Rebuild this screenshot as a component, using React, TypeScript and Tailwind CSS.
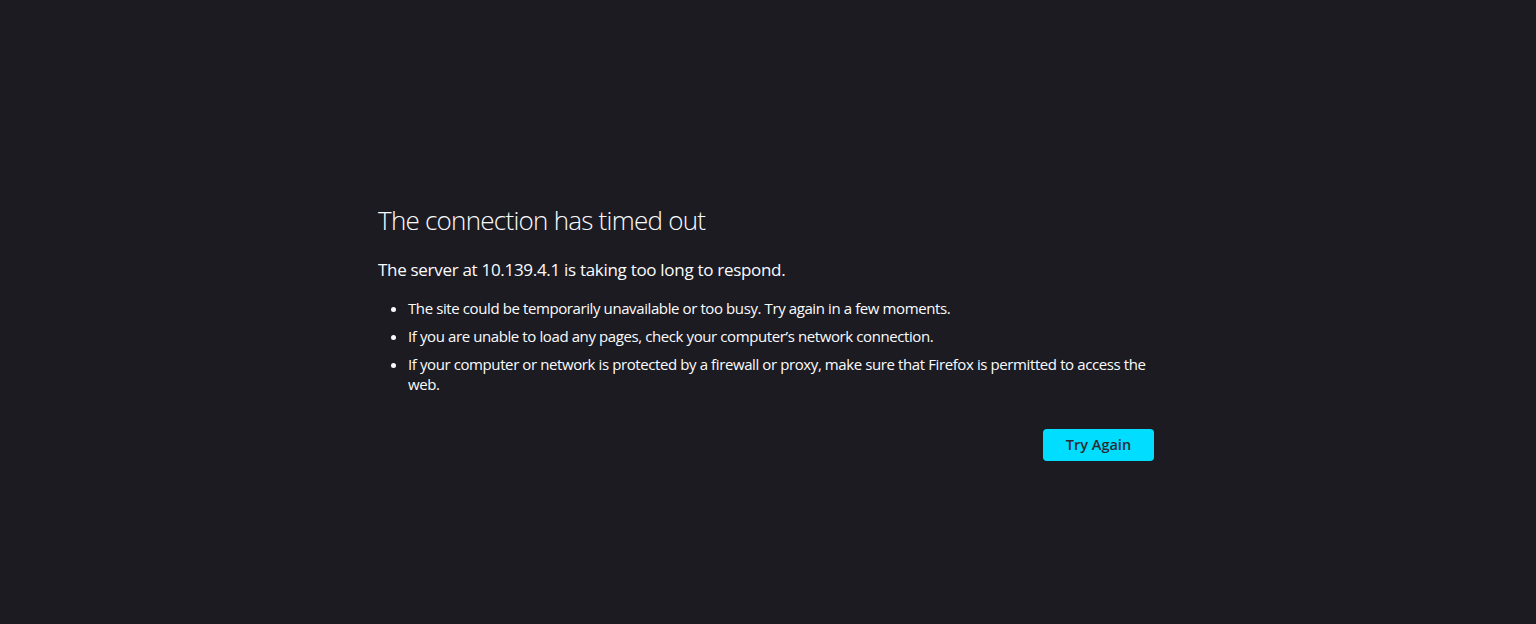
export default function App() {
  const items = [
    "The site could be temporarily unavailable or too busy. Try again in a few moments.",
    "If you are unable to load any pages, check your computer’s network connection.",
    "If your computer or network is protected by a firewall or proxy, make sure that Firefox is permitted to access the web.",
  ];

  return (
    <main className="w-full h-[624px] bg-[#1c1b22] text-[#fbfbfe] font-['Open_Sans',sans-serif] flex justify-center pr-[4px]">
      <div className="w-[776px] pt-[202px]">
        <h1 className="text-[26px] font-light leading-[36px] tracking-[-0.75px]">
          The connection has timed out
        </h1>
        <p className="mt-[20px] text-[17px] leading-[24px] tracking-[-0.3px]">
          The server at 10.139.4.1 is taking too long to respond.
        </p>
        <ul className="mt-[16px] pl-[30px] list-disc text-[15px] leading-[20px] tracking-[-0.4px]">
          {items.map((t) => (
            <li key={t} className="mb-[8px]">
              {t}
            </li>
          ))}
        </ul>
        <div className="mt-[35px] flex justify-end">
          <button className="w-[111px] h-[32px] rounded-[4px] bg-[#00ddff] text-[#2b2a33] text-[14.5px] font-semibold">
            Try Again
          </button>
        </div>
      </div>
    </main>
  );
}
